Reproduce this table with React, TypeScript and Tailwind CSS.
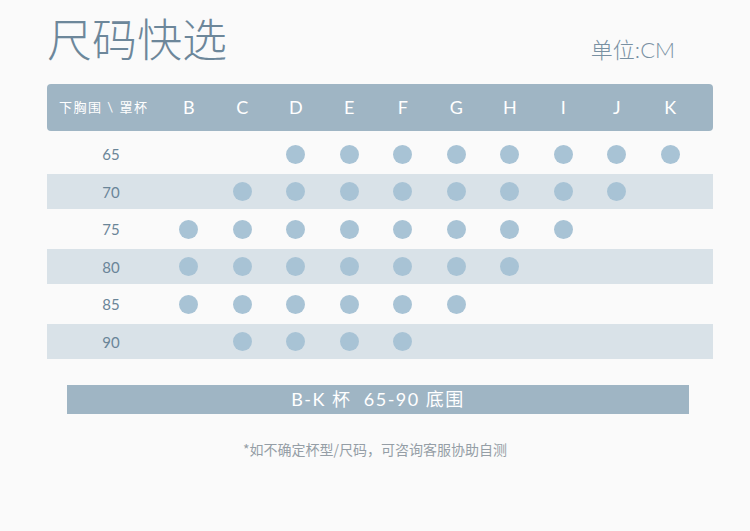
import React from 'react';

const cups = ['B', 'C', 'D', 'E', 'F', 'G', 'H', 'I', 'J', 'K'];

const rows = [
  { band: '65', from: 'D', to: 'K' },
  { band: '70', from: 'C', to: 'J' },
  { band: '75', from: 'B', to: 'I' },
  { band: '80', from: 'B', to: 'H' },
  { band: '85', from: 'B', to: 'G' },
  { band: '90', from: 'C', to: 'F' },
];

const font = { fontFamily: '"Lato", "Noto Sans CJK SC", sans-serif' };

const App = () => {
  return (
    <div className="w-[750px] h-[531px] bg-[#fafafa] overflow-hidden" style={font}>
      <div className="flex items-end justify-between pl-[47px] pr-[75px] pt-[12px]">
        <h1 className="text-[45px] leading-[56px] font-light text-[#6d879a]">尺码快选</h1>
        <div className="text-[22px] leading-[28px] font-light text-[#7890a2] mb-[4px]">单位:CM</div>
      </div>

      <div className="ml-[47px] w-[666px] mt-[16px]">
        <div className="grid grid-cols-[115px_repeat(10,53.5px)] items-center h-[47px] rounded-[4px] bg-[#9fb5c4] text-white">
          <div className="pl-[12px] text-[13px] tracking-[1.5px] whitespace-nowrap">下胸围 \ 罩杯</div>
          {cups.map((c) => (
            <div key={c} className="text-center text-[18px]">{c}</div>
          ))}
        </div>

        <div className="mt-[3px]">
          {rows.map((r, i) => {
            const a = cups.indexOf(r.from);
            const b = cups.indexOf(r.to);
            return (
              <div
                key={r.band}
                className={
                  i % 2 === 1
                    ? 'grid grid-cols-[115px_repeat(10,53.5px)] items-center h-[35px] bg-[#d9e2e8]'
                    : 'grid grid-cols-[115px_repeat(10,53.5px)] items-center h-[40px]'
                }
              >
                <div className="pl-[13px] pt-[1px] text-center text-[15px] text-[#6a8598]">{r.band}</div>
                {cups.map((c, j) => (
                  <div key={c} className="flex justify-center">
                    {j >= a && j <= b && <span className="block w-[19px] h-[19px] rounded-full bg-[#a8c3d5]" />}
                  </div>
                ))}
              </div>
            );
          })}
        </div>
      </div>

      <div className="mx-[67px] w-[622px] mt-[26px] h-[29px] bg-[#9fb5c4] flex items-center justify-center text-white text-[18px] tracking-[1.5px]">
        B-K 杯&nbsp;&nbsp;65-90 底围
      </div>

      <p className="mt-[25px] text-center text-[14px] text-[#959ea6] font-['Noto_Sans_CJK_SC',sans-serif]">
        *如不确定杯型/尺码，可咨询客服协助自测
      </p>
    </div>
  );
};

export default App;
